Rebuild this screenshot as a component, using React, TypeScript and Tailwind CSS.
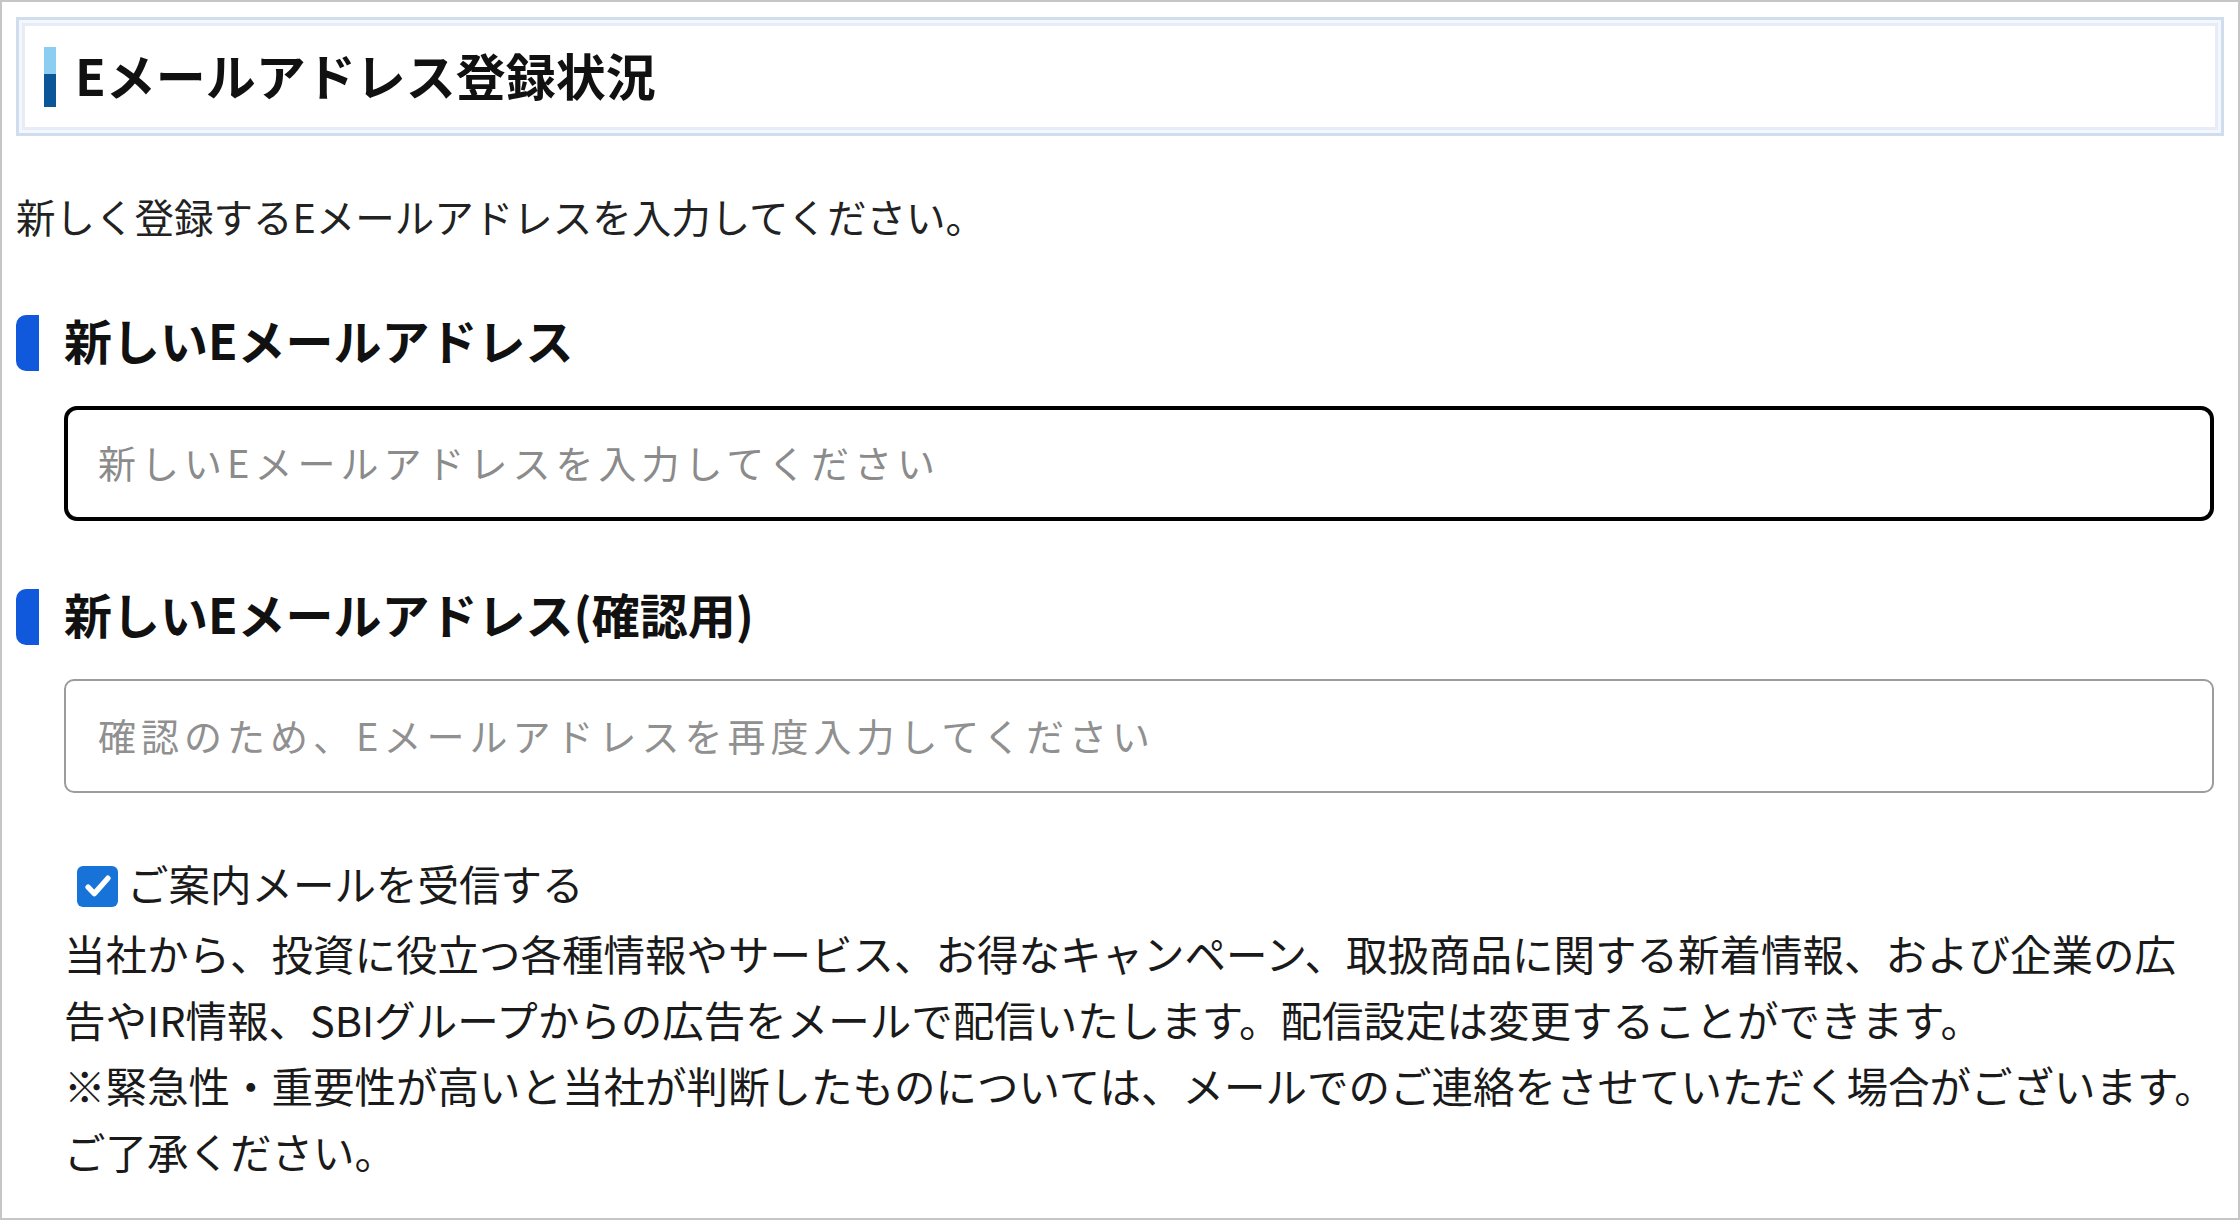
import React from "react";

const font = "font-['Noto_Sans_CJK_JP','Noto_Sans',sans-serif]";

function SectionHeading({ children }: { children: React.ReactNode }) {
  return (
    <div className="flex h-[56px] items-center">
      <div className="h-[56px] w-[23px] shrink-0 rounded-l-[10px] bg-[#1159dc]" />
      <h2 className="ml-[25px] whitespace-nowrap pb-[8px] text-[48px] font-bold leading-none text-[#111]">
        {children}
      </h2>
    </div>
  );
}

export default function App() {
  return (
    <div className={`${font} h-[1220px] w-[2240px] border-2 border-[#c6c6c6] bg-white px-[14px] pt-[15px] text-[#1a1a1a]`}>
      {/* title box with double pale-blue border */}
      <div className="h-[119px] border-[3px] border-[#d0ddef] bg-[#f4f7fc] p-[3px]">
        <div className="flex h-full items-center border-[3px] border-[#e6edf8] bg-white pl-[19px]">
          <div className="flex h-[60px] w-[12px] flex-col">
            <div className="h-[27px] bg-[#8ccdf2]" />
            <div className="flex-1 bg-[#0b5699]" />
          </div>
          <h1 className="ml-[19px] whitespace-nowrap pb-[5px] text-[50px] font-bold leading-none text-[#111]">
            Eメールアドレス登録状況
          </h1>
        </div>
      </div>

      <p className="mt-[52px] whitespace-nowrap text-[39.5px] leading-[56px] text-[#222]">
        新しく登録するEメールアドレスを入力してください。
      </p>

      <div className="mt-[71px]">
        <SectionHeading>新しいEメールアドレス</SectionHeading>
      </div>
      <div className="mt-[35px] pl-[48px] pr-[10px]">
        <input
          type="email"
          placeholder="新しいEメールアドレスを入力してください"
          className="block h-[115px] w-full rounded-[13px] border-[4px] border-black bg-white pb-[4px] pl-[30px] text-[38px] tracking-[5px] text-[#111] outline-none placeholder:text-[#8b8b8b]"
        />
      </div>

      <div className="mt-[68px]">
        <SectionHeading>新しいEメールアドレス(確認用)</SectionHeading>
      </div>
      <div className="mt-[34px] pl-[48px] pr-[10px]">
        <input
          type="email"
          placeholder="確認のため、Eメールアドレスを再度入力してください"
          className="block h-[114px] w-full rounded-[10px] border-2 border-[#9c9c9c] bg-white pb-[4px] pl-[32px] text-[38px] tracking-[5px] text-[#111] outline-none placeholder:text-[#909090]"
        />
      </div>

      <div className="mt-[71px] pl-[61px]">
        <label className="flex h-[44px] items-center">
          <span className="flex h-[41px] w-[41px] items-center justify-center rounded-[6px] bg-[#1873d8]">
            <svg viewBox="0 0 24 24" className="h-[34px] w-[34px]" fill="none" stroke="white" strokeWidth="3.8" strokeLinecap="round" strokeLinejoin="round">
              <path d="M5 12.8l4.4 4.6L19 6.5" />
            </svg>
          </span>
          <span className="ml-[9px] whitespace-nowrap pb-[4px] text-[41.5px] leading-none">ご案内メールを受信する</span>
        </label>
      </div>

      <p className="mt-[12px] whitespace-nowrap pl-[48px] text-[41.5px] leading-[66px]">
        当社から、投資に役立つ各種情報やサービス、お得なキャンペーン、取扱商品に関する新着情報、および企業の広
        <br />
        告やIR情報、SBIグループからの広告をメールで配信いたします。配信設定は変更することができます。
        <br />
        ※緊急性・重要性が高いと当社が判断したものについては、メールでのご連絡をさせていただく場合がございます。
        <br />
        ご了承ください。
      </p>
    </div>
  );
}
